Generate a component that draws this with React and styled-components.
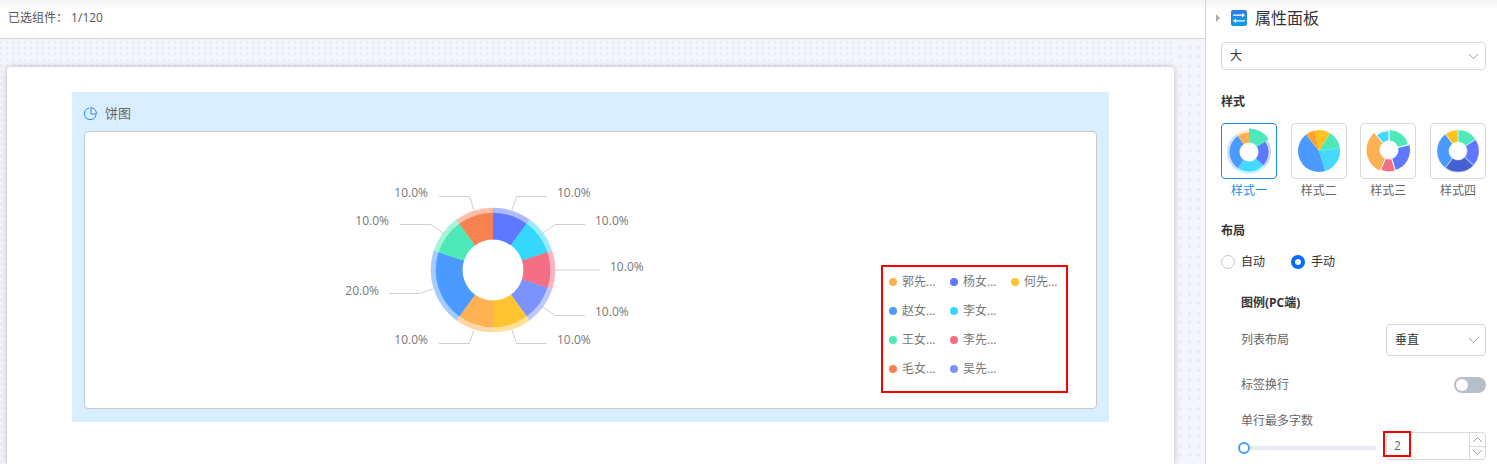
import React, { useState } from "react";
import styled, { createGlobalStyle } from "styled-components";

const GlobalStyle = createGlobalStyle`
  *, *::before, *::after { box-sizing: border-box; }
  body {
    margin: 0;
    font: 12px/20px "Open Sans", "Noto Sans CJK SC", sans-serif;
    color: #333;
    background: #fff;
  }
  button, input, select { font: inherit; color: inherit; }
  h1, h2, h3, ul, fieldset { margin: 0; padding: 0; border: 0; font-size: inherit; }
  svg { display: block; flex: none; }
`;

const topShade = "linear-gradient(#f3f3f3, #fff 10px)";

const Shell = styled.div`
  display: flex;
  height: 100vh;
  overflow: hidden;
`;

const Workspace = styled.main`
  flex: 1;
  min-width: 0;
  display: flex;
  flex-direction: column;
`;

const Toolbar = styled.header`
  display: flex;
  align-items: center;
  flex: none;
  height: 39px;
  padding: 0 8px 2px;
  color: #555;
  background: ${topShade};
  border-bottom: 1px solid #d4d4d4;
  white-space: pre;
`;

const Canvas = styled.div`
  flex: 1;
  display: flex;
  min-height: 0;
  padding-left: 7px;
  background: radial-gradient(circle at 1px 3px, #e9ecf1 1px, transparent 2px) 0 0 / 6px 6px #f5f6fb;
`;

const Page = styled.section`
  position: relative;
  flex: 1;
  min-width: 0;
  margin-top: 28px;
  padding: 25px 65px;
  background: #fff;
  border-radius: 4px 4px 0 0;
  box-shadow: 0 0 7px rgba(0, 0, 0, 0.24);
`;

const Gutter = styled.div`
  width: 31px;
  background:
    conic-gradient(from 0deg at 3px 3px, transparent 270deg, #e9ecf0 0) 5px 7px / 9px 19px,
    conic-gradient(from 0deg at 3px 3px, transparent 270deg, #e9ecf0 0) 5px 16px / 9px 19px,
    #f5f6fb;
`;

const Widget = styled.article`
  padding: 0 12px 13px;
  background: #d9eeff;
`;

const WidgetHeader = styled.header`
  display: flex;
  align-items: center;
  gap: 8px;
  height: 39px;
  padding-top: 3px;
  h2 {
    font-size: 13px;
    font-weight: 400;
    color: #666;
  }
`;

const ChartCard = styled.div`
  display: flex;
  align-items: center;
  height: 278px;
  padding-left: 20px;
  background: #fff;
  border: 1px solid #c8cacc;
  border-radius: 4px;
`;

const ChartArea = styled.div`
  flex: 1;
  display: flex;
  justify-content: center;
  text {
    font-size: 12px;
    fill: #777;
  }
`;

const Legend = styled.ul`
  display: grid;
  grid-auto-flow: column;
  grid-template-rows: repeat(4, 29px);
  grid-auto-columns: 61px;
  align-self: flex-end;
  width: 187px;
  margin: 0 28px 15px 0;
  padding-bottom: 8px;
  border: 2px solid #f00;
  list-style: none;
`;

const LegendItem = styled.li`
  display: flex;
  align-items: center;
  gap: 5px;
  padding-left: 6px;
  color: #777;
  white-space: nowrap;
  &::before {
    content: "";
    width: 8px;
    height: 8px;
    border-radius: 50%;
    background: ${(p) => p.$color};
  }
`;

const Panel = styled.aside`
  flex: none;
  width: 292px;
  background: ${topShade};
  border-left: 1px solid #d4d4d4;
`;

const PanelHeader = styled.header`
  display: flex;
  align-items: center;
  height: 36px;
  padding-left: 10px;
  h1 {
    margin-left: 8px;
    font-size: 16px;
    font-weight: 400;
  }
`;

const CollapseButton = styled.button`
  display: flex;
  width: 15px;
  padding: 0;
  border: 0;
  background: none;
  cursor: pointer;
`;

const PanelBody = styled.div`
  padding: 6px 11px 0 15px;
`;

const SelectBox = styled.span`
  display: grid;
  align-items: center;
  width: ${(p) => p.$width || "100%"};
  > * { grid-area: 1 / 1; }
  svg {
    justify-self: end;
    margin-right: 7px;
    pointer-events: none;
  }
`;

const NativeSelect = styled.select`
  appearance: none;
  width: 100%;
  height: ${(p) => p.$height};
  padding: 0 24px 0 8px;
  border: 1px solid #d9d9d9;
  border-radius: 4px;
  color: #333;
  background: #fff;
`;

const SectionTitle = styled.h2`
  margin: ${(p) => p.$top} 0 11px;
  font-weight: 700;
`;

const StyleList = styled.div`
  display: flex;
  justify-content: space-between;
`;

const StyleOption = styled.button`
  display: flex;
  flex-direction: column;
  align-items: center;
  gap: 2px;
  padding: 0;
  border: 0;
  background: none;
  color: ${(p) => (p.$active ? "#1a8cff" : "#666")};
  cursor: pointer;
  svg {
    border: 1px solid ${(p) => (p.$active ? "#1a8cff" : "#d9d9d9")};
    border-radius: 4px;
  }
`;

const RadioRow = styled.fieldset`
  display: flex;
`;

const RadioLabel = styled.label`
  display: flex;
  align-items: center;
  gap: 6px;
  width: 70px;
`;

const Radio = styled.input`
  appearance: none;
  width: 14px;
  height: 14px;
  margin: 0;
  border: 1px solid #c8c8c8;
  border-radius: 50%;
  background: #fff;
  &:checked { border: 4px solid #0569ff; }
`;

const LegendSettings = styled.div`
  padding-left: 20px;
`;

const Field = styled.div`
  display: flex;
  align-items: center;
  justify-content: space-between;
  margin-bottom: ${(p) => p.$bottom};
  color: #666;
`;

const Switch = styled.input`
  appearance: none;
  display: flex;
  width: 32px;
  height: 16px;
  margin: 0;
  padding: 2px;
  border-radius: 8px;
  background: #b4bfca;
  cursor: pointer;
  &::before {
    content: "";
    width: 12px;
    height: 12px;
    border-radius: 50%;
    background: #fff;
  }
  &:checked {
    justify-content: flex-end;
    background: #0569ff;
  }
`;

const Slider = styled.input`
  appearance: none;
  flex: 1;
  min-width: 0;
  height: 12px;
  margin: 4px 10px 0 -3px;
  background: linear-gradient(#e6ecf1, #e6ecf1) 3px 4px / 100% 4px no-repeat;
  &::-webkit-slider-thumb {
    appearance: none;
    width: 12px;
    height: 12px;
    border: 2px solid #45a0f8;
    border-radius: 50%;
    background: #fff;
  }
`;

const NumberBox = styled.div`
  position: relative;
  display: flex;
  width: 100px;
  height: 28px;
  border: 1px solid #d9d9d9;
  border-radius: 4px;
`;

const NumberInput = styled.input`
  appearance: textfield;
  flex: 1;
  min-width: 0;
  padding: 0 7px;
  border: 0;
  background: none;
  outline: none;
  &::-webkit-inner-spin-button { display: none; }
`;

const Stepper = styled.div`
  display: flex;
  flex-direction: column;
  width: 16px;
  border-left: 1px solid #d9d9d9;
`;

const StepButton = styled.button`
  flex: 1;
  display: flex;
  align-items: center;
  justify-content: center;
  padding: 0;
  border: 0;
  background: none;
  & + & { border-top: 1px solid #d9d9d9; }
`;

const Marker = styled.span`
  position: absolute;
  top: -2px;
  left: -4px;
  width: 28px;
  height: 26px;
  border: 2px solid #f00;
  pointer-events: none;
`;

const point = (cx, cy, r, deg) => {
  const a = (deg * Math.PI) / 180;
  return `${(cx + r * Math.sin(a)).toFixed(2)} ${(cy - r * Math.cos(a)).toFixed(2)}`;
};

function Slice({ cx = 0, cy = 0, r, hole = 0, from, to, ...rest }) {
  const large = to - from > 180 ? 1 : 0;
  const d =
    `M${point(cx, cy, r, from)}A${r} ${r} 0 ${large} 1 ${point(cx, cy, r, to)}` +
    `L${point(cx, cy, hole, to)}` +
    (hole ? `A${hole} ${hole} 0 ${large} 0 ${point(cx, cy, hole, from)}` : "") +
    "Z";
  return <path d={d} {...rest} />;
}

const slices = [
  { from: 0, to: 36, color: "#5e78ff", line: "19,-60 23.5,-73.5 54,-73.5", x: 64, y: -73 },
  { from: 36, to: 72, color: "#34d8ff", line: "50,-37 62,-45.5 92,-45.5", x: 102, y: -45 },
  { from: 72, to: 108, color: "#f46e84", line: "62,0 107,0", x: 117, y: 1 },
  { from: 108, to: 144, color: "#7b93ff", line: "50,37 62,45.5 92,45.5", x: 102, y: 46 },
  { from: 144, to: 180, color: "#ffc530", line: "19,60 23.5,73.5 54,73.5", x: 64, y: 74 },
  { from: 180, to: 216, color: "#ffb253", line: "-19,60 -23.5,73.5 -54,73.5", x: -65, y: 74 },
  { from: 216, to: 288, color: "#4a9aff", line: "-60,19 -73,23.5 -104,23.5", x: -114, y: 25 },
  { from: 288, to: 324, color: "#4de9b8", line: "-50,-37 -62,-45.5 -93,-45.5", x: -104, y: -45 },
  { from: 324, to: 360, color: "#f8824f", line: "-19,-60 -23.5,-73.5 -54,-73.5", x: -65, y: -73 },
];

const legend = [
  ["郭先...", "#ffb253"],
  ["赵女...", "#4a9aff"],
  ["王女...", "#4de9b8"],
  ["毛女...", "#f8824f"],
  ["杨女...", "#5e78ff"],
  ["李女...", "#34d8ff"],
  ["李先...", "#f46e84"],
  ["吴先...", "#7b93ff"],
  ["何先...", "#ffc530"],
];

const pieStyles = [
  {
    name: "样式一",
    cx: 0, cy: 1, hole: 9.5, halo: 22, edge: 0,
    parts: [
      [57, 133, 19.5, "#5e78ff"],
      [133, 215, 19.5, "#45d9ff"],
      [215, 325, 19.5, "#4a9aff"],
      [325, 360, 19.5, "#ffb253"],
      [0, 57, 23.5, "#4de9b8"],
    ],
  },
  {
    name: "样式二",
    cx: 0, cy: 0, hole: 0, edge: 0,
    parts: [
      [-12, 32, 21, "#ffc221"],
      [32, 82, 21, "#4de9b8"],
      [82, 163, 21, "#45d9ff"],
      [163, 322, 21, "#4a9aff"],
      [322, 348, 21, "#ffa22e"],
    ],
  },
  {
    name: "样式三",
    cx: 1, cy: -1, hole: 9, edge: 1,
    parts: [
      [0, 75, 20.5, "#4de9b8"],
      [75, 163, 21.5, "#5e78ff"],
      [163, 203, 22, "#f46e84"],
      [203, 320, 23, "#ffb253"],
      [320, 360, 19.5, "#45d9ff"],
    ],
  },
  {
    name: "样式四",
    cx: 0, cy: 0, hole: 9, edge: 0.5,
    parts: [
      [0, 57, 21.2, "#4de9b8"],
      [57, 133, 21.2, "#5e78ff"],
      [133, 217, 21.2, "#465fd2"],
      [217, 323, 21.2, "#4a9aff"],
      [323, 360, 21.2, "#ffc221"],
    ],
  },
];

function PieThumb({ cx, cy, hole, halo, edge, parts }) {
  return (
    <svg width="56" height="56" viewBox="-27 -27 54 54" aria-hidden="true">
      {halo &&
        parts.map(([from, to, , color]) => (
          <Slice key={from} cx={cx} cy={cy} r={halo} hole={hole} from={from} to={to} fill={color} opacity=".3" />
        ))}
      {parts.map(([from, to, r, color]) => (
        <Slice key={from} cx={cx} cy={cy} r={r} hole={hole} from={from} to={to} fill={color} stroke="#fff" strokeWidth={edge} />
      ))}
    </svg>
  );
}

function PieChart() {
  return (
    <svg width="306" height="190" viewBox="-153 -95 306 190" role="img" aria-label="饼图">
      {slices.map((s) => (
        <g key={s.from}>
          <Slice r={62.3} hole={30.5} from={s.from} to={s.to} fill={s.color} opacity=".5" />
          <Slice r={57.3} hole={30.5} from={s.from} to={s.to} fill={s.color} />
          <polyline points={s.line} fill="none" stroke="#d0d0d0" />
          <text x={s.x} y={s.y} textAnchor={s.x < 0 ? "end" : "start"}>
            {s.to - s.from === 72 ? "20.0%" : "10.0%"}
          </text>
        </g>
      ))}
    </svg>
  );
}

function Chevron({ up }) {
  return (
    <svg width="11" height="7" viewBox="0 0 11 7" fill="none" stroke="#93a8ae" aria-hidden="true">
      <path d={up ? "M1 6l4.5-4.5L10 6" : "M1 1l4.5 4.5L10 1"} />
    </svg>
  );
}

function Dropdown({ id, label, width, height, options }) {
  return (
    <SelectBox $width={width}>
      <NativeSelect id={id} aria-label={label} $height={height}>
        {options.map((o) => (
          <option key={o}>{o}</option>
        ))}
      </NativeSelect>
      <Chevron />
    </SelectBox>
  );
}

export default function App() {
  const [active, setActive] = useState(0);
  const [limit, setLimit] = useState(2);
  const change = (value) => setLimit(Math.min(20, Math.max(2, Number(value))));

  return (
    <Shell>
      <GlobalStyle />
      <Workspace>
        <Toolbar>已选组件： 1/120</Toolbar>
        <Canvas>
          <Page>
            <Widget>
              <WidgetHeader>
                <svg width="13" height="13" viewBox="0 0 13 13" fill="none" stroke="#2b87f0" aria-hidden="true">
                  <path d="M5 1.1A5.8 5.8 0 1 0 11.9 8" />
                  <path d="M7 .6v6.4h5.5C12.6 3.6 10.2 1 7 .6Z" />
                </svg>
                <h2>饼图</h2>
              </WidgetHeader>
              <ChartCard>
                <ChartArea>
                  <PieChart />
                </ChartArea>
                <Legend>
                  {legend.map(([name, color]) => (
                    <LegendItem key={name} $color={color}>{name}</LegendItem>
                  ))}
                </Legend>
              </ChartCard>
            </Widget>
          </Page>
          <Gutter />
        </Canvas>
      </Workspace>

      <Panel>
        <PanelHeader>
          <CollapseButton type="button" aria-label="收起">
            <svg width="4" height="8" viewBox="0 0 4 8"><path d="M0 0l4 4-4 4Z" fill="#aaa" /></svg>
          </CollapseButton>
          <svg width="16" height="16" viewBox="0 0 16 16" aria-hidden="true">
            <defs>
              <linearGradient id="panelIcon" x2="0" y2="1">
                <stop stopColor="#2f7de6" />
                <stop offset="1" stopColor="#08a0ee" />
              </linearGradient>
            </defs>
            <rect width="16" height="16" rx="2" fill="url(#panelIcon)" />
            <path d="M2 5.2h11M3 10.8h11" stroke="#fff" strokeWidth="1.2" />
            <path d="M11 3l3 2.2-3 2.2ZM5 8.6l-3 2.2 3 2.2Z" fill="#fff" />
          </svg>
          <h1>属性面板</h1>
        </PanelHeader>
        <PanelBody>
          <Dropdown label="大小" height="28px" options={["大", "中", "小"]} />

          <SectionTitle $top="22px">样式</SectionTitle>
          <StyleList>
            {pieStyles.map(({ name, ...shape }, i) => (
              <StyleOption key={name} type="button" $active={i === active} onClick={() => setActive(i)}>
                <PieThumb {...shape} />
                {name}
              </StyleOption>
            ))}
          </StyleList>

          <SectionTitle $top="20px">布局</SectionTitle>
          <RadioRow aria-label="布局">
            <RadioLabel><Radio type="radio" name="layout" />自动</RadioLabel>
            <RadioLabel><Radio type="radio" name="layout" defaultChecked />手动</RadioLabel>
          </RadioRow>

          <LegendSettings>
            <SectionTitle as="h3" $top="21px">图例(PC端)</SectionTitle>
            <Field $bottom="19px">
              <label htmlFor="list-layout">列表布局</label>
              <Dropdown id="list-layout" width="100px" height="32px" options={["垂直", "水平"]} />
            </Field>
            <Field $bottom="16px">
              <label htmlFor="wrap">标签换行</label>
              <Switch id="wrap" type="checkbox" role="switch" />
            </Field>
            <Field $bottom="1px">
              <label htmlFor="limit">单行最多字数</label>
            </Field>
            <Field $bottom="0">
              <Slider type="range" min="2" max="20" value={limit} aria-label="单行最多字数" onChange={(e) => change(e.target.value)} />
              <NumberBox>
                <NumberInput id="limit" type="number" value={limit} onChange={(e) => change(e.target.value)} />
                <Stepper>
                  <StepButton type="button" aria-label="增加" onClick={() => change(limit + 1)}><Chevron up /></StepButton>
                  <StepButton type="button" aria-label="减少" onClick={() => change(limit - 1)}><Chevron /></StepButton>
                </Stepper>
                <Marker />
              </NumberBox>
            </Field>
          </LegendSettings>
        </PanelBody>
      </Panel>
    </Shell>
  );
}
